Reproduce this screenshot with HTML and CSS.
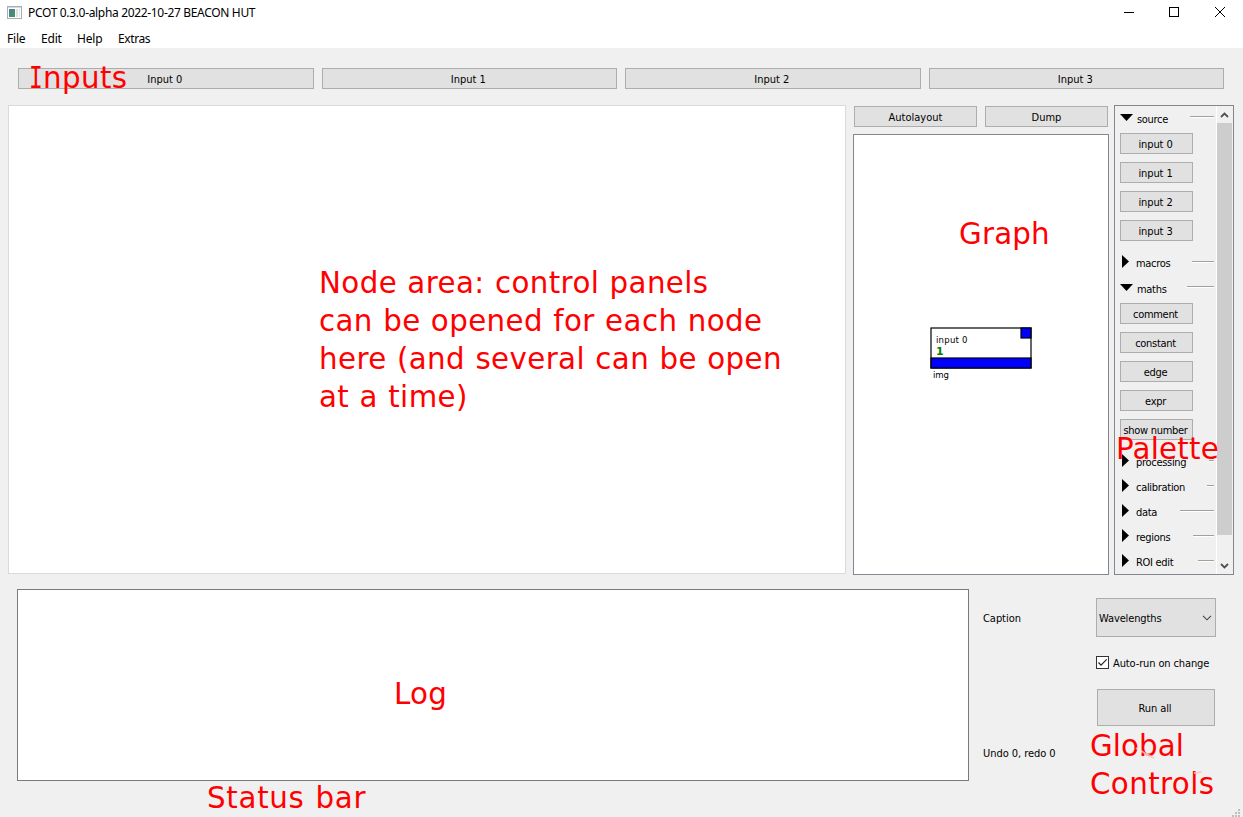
FILE: index.html
```html
<!DOCTYPE html>
<html lang="en">
<head>
<meta charset="utf-8">
<title>PCOT</title>
<link rel="stylesheet" href="styles.css">
</head>
<body>
<div class="window">
  <header class="titlebar">
    <svg class="app-icon" width="15" height="13" viewBox="0 0 15 13"><defs><linearGradient id="g" x1="0" y1="0" x2="0.6" y2="1"><stop offset="0" stop-color="#4a7a9c"/><stop offset="1" stop-color="#46936a"/></linearGradient></defs><rect x=".5" y=".5" width="14" height="12" fill="#fff" stroke="#a9adb1"/><rect x="1" y="1" width="13" height="1" fill="#d5d8da"/><rect x="2" y="3" width="6" height="8" fill="url(#g)"/><rect x="9" y="3" width="2" height="8" fill="#dde0e2"/><rect x="12" y="3" width="1" height="8" fill="#e3e5e7"/></svg>
    <span class="title">PCOT 0.3.0-alpha 2022-10-27 BEACON HUT</span>
    <svg class="controls" width="100" height="12" viewBox="0 0 100 12" fill="none" stroke="#000"><path d="M0 6.5H10"/><rect x="45.500" y="1.500" width="9" height="9"/><path d="M91 1L101 11M101 1L91 11" /></svg>
  </header>
  <nav class="menubar"><span class="m-file">File</span><span class="m-edit">Edit</span><span class="m-help">Help</span><span class="m-extras">Extras</span></nav>

  <section class="inputs">
    <button class="btn">Input 0</button><button class="btn">Input 1</button><button class="btn">Input 2</button><button class="btn">Input 3</button>
  </section>

  <main class="work">
    <section class="node-area"></section>
    <section class="graph-col">
      <div class="graph-tools"><button class="btn">Autolayout</button><button class="btn">Dump</button></div>
      <div class="graph">
        <svg class="node" width="104" height="56" viewBox="0 0 104 56">
          <g stroke="#000" stroke-width="1.200"><rect x="1" y="1" width="100" height="40" fill="#fff"/><rect x="91" y="1" width="10" height="10" fill="#00f"/><rect x="1" y="31" width="100" height="10" fill="#00f"/></g>
          <text class="node-name" x="6" y="16" textLength="31.500">input 0</text>
          <text class="node-count" x="6" y="28">1</text>
          <text class="node-name" x="3" y="51" textLength="16">img</text>
        </svg>
      </div>
    </section>
    <aside class="palette">
      <div class="palette-list">
        <div class="group open l24"><i class="down"></i><span>source</span><hr></div>
        <div class="items sources"><button class="btn">input 0</button><button class="btn">input 1</button><button class="btn">input 2</button><button class="btn">input 3</button></div>
        <div class="group l22"><i class="right"></i><span>macros</span><hr></div>
        <div class="group open l27"><i class="down"></i><span>maths</span><hr></div>
        <div class="items"><button class="btn">comment</button><button class="btn">constant</button><button class="btn">edge</button><button class="btn">expr</button><button class="btn">show number</button></div>
        <div class="group l5"><i class="right"></i><span>processing</span><hr></div>
        <div class="group l7"><i class="right"></i><span>calibration</span><hr></div>
        <div class="group l34"><i class="right"></i><span>data</span><hr></div>
        <div class="group l21"><i class="right"></i><span>regions</span><hr></div>
        <div class="group l16"><i class="right"></i><span>ROI edit</span><hr></div>
      </div>
      <div class="scrollbar">
        <svg width="15" height="17" viewBox="0 0 15 17" fill="none" stroke="#505050" stroke-width="1.800"><path d="M4 11L7.500 7.500L11 11"/></svg>
        <div class="thumb"></div>
        <svg width="15" height="17" viewBox="0 0 15 17" fill="none" stroke="#505050" stroke-width="1.800"><path d="M4 7L7.500 10.500L11 7"/></svg>
      </div>
    </aside>
  </main>

  <section class="bottom">
    <div class="log"></div>
    <div class="status"><span>Caption</span><span>Undo 0, redo 0</span></div>
    <div class="global">
      <div class="select"><span>Wavelengths</span><svg width="10" height="6" viewBox="0 0 10 6" fill="none" stroke="#444" stroke-width="1.100"><path d="M1 .8L5 4.800L9 .8"/></svg></div>
      <label class="check"><svg width="13" height="13" viewBox="0 0 13 13" fill="none"><rect x=".5" y=".5" width="12" height="12" fill="#fff" stroke="#333"/><path d="M2.500 6.500L5 9.200L10.700 3.300" stroke="#222" stroke-width="1.200"/></svg><span>Auto-run on change</span></label>
      <button class="btn run">Run all</button>
    </div>
  </section>

  <svg class="grip" width="8" height="8" viewBox="0 0 8 8" fill="#bfbfbf"><path d="M6 0h2v2h-2zM3 3h2v2h-2zM6 3h2v2h-2zM0 6h2v2h-2zM3 6h2v2h-2zM6 6h2v2h-2z"/></svg>

  <div class="note n-inputs"><span class="slab">I</span>nputs</div>
  <div class="note n-node">Node area: control panels<br>can be opened for each node<br>here (and several can be open<br>at a time)</div>
  <div class="note n-graph">Graph</div>
  <div class="note n-palette">Palette</div>
  <div class="note n-log">Log</div>
  <div class="note n-status">Status bar</div>
  <div class="note n-global">Global<br><span class="wide">Controls</span></div>
  <svg class="scuffs" width="70" height="32" viewBox="0 0 70 32" fill="none" stroke-width="2"><path d="M2 2L14 9" stroke="#f0f0f0" stroke-opacity=".7"/><path d="M12 8L20 12M60 27l8 -1" stroke="#ffc4c4" stroke-opacity=".8"/></svg>
</div>
</body>
</html>
```
FILE: styles.css
```css
* { box-sizing: border-box; }
body { margin: 0; background: #f0f0f0; color: #000; font: 11px/13px "DejaVu Sans Condensed", "DejaVu Sans", sans-serif; font-stretch: condensed; letter-spacing: -0.3px; }
.window { position: relative; width: 1243px; height: 817px; overflow: hidden; display: flex; flex-direction: column; }
.titlebar, .menubar { background: #fff; font-family: "Noto Sans", sans-serif; font-size: 12px; font-stretch: normal; display: flex; }
.titlebar { height: 26px; align-items: center; padding: 0 17px 2px 7px; }
.title { margin-left: 6px; letter-spacing: -0.33px; }
.controls { margin-left: auto; margin-right: 2px; overflow: visible; }
.menubar { height: 22px; padding: 6px 0 0 7px; letter-spacing: -0.2px; }
.m-file { width: 34px; }
.m-edit { width: 36px; }
.m-help { width: 41px; }
.m-extras { letter-spacing: -0.4px; }
.btn { display: block; height: 21px; margin: 0; padding: 2px 2px 0 0; border: 1px solid #adadad; background: #e1e1e1; color: #000; font: inherit; font-stretch: condensed; letter-spacing: inherit; text-align: center; white-space: nowrap; }
.inputs { display: grid; grid-template-columns: repeat(4, 1fr); gap: 8px; padding: 20px 19px 0 18px; height: 57px; letter-spacing: 0; }
.work { display: flex; height: 470px; padding: 0 9px 0 8px; }
.node-area { width: 838px; height: 469px; background: #fff; border: 1px solid #dadada; }
.graph-col { width: 256px; margin-left: 7px; display: flex; flex-direction: column; }
.graph-tools { display: grid; grid-template-columns: 1fr 1fr; gap: 8px; padding: 1px 1px 7px; letter-spacing: 0; }
.graph-tools .btn { padding-right: 0; }
.graph { position: relative; flex: 1; background: #fff; border: 1px solid #828790; }
.node { position: absolute; left: 76px; top: 192px; }
.node-name { font-size: 9.5px; letter-spacing: 0; }
.node-count { font: bold 11px "DejaVu Sans", sans-serif; fill: #008000; }
.palette { width: 120px; margin-left: 5px; border: 1px solid #828790; display: flex; overflow: hidden; }
.palette-list { width: 101px; padding-left: 5px; }
.group { height: 25px; display: flex; align-items: flex-start; padding: 5px 2px 0 0; }
.group span { margin-top: 2px; white-space: nowrap; }
.group hr { margin: 6px 0 0 auto; border: 0; height: 2px; background: #a0a0a0; border-bottom: 1px solid #fff; }
.open { height: 27px; }
.open hr { margin-top: 5px; }
.items + .group { margin-top: 9px; }
.group:not(.open) + .open { height: 28px; padding-top: 6px; }
.group .down { width: 17px; height: 7px; margin-top: 3px; background: #000; clip-path: polygon(0 0, 13px 0, 6.5px 7px); }
.group .right { width: 16px; height: 13px; background: #000; clip-path: polygon(2px 0, 9px 6.5px, 2px 13px); }
.l24 hr { width: 24px; }
.l22 hr { width: 22px; }
.l27 hr { width: 27px; }
.l5 hr { width: 5px; }
.l7 hr { width: 7px; }
.l34 hr { width: 34px; }
.l21 hr { width: 21px; }
.l16 hr { width: 16px; }
.items { display: grid; gap: 8px; width: 73px; }
.sources { letter-spacing: -0.1px; }
.scrollbar { width: 17px; border-left: 1px solid #fff; padding-right: 1px; display: flex; flex-direction: column; }
.scrollbar svg { display: block; flex: none; }
.thumb { height: 412px; flex: none; background: #cdcdcd; }
.scrollbar svg:last-child { margin-top: 22px; }
.bottom { display: flex; padding: 14px 0 0 17px; letter-spacing: -0.12px; }
.log { width: 952px; height: 192px; background: #fff; border: 1px solid #7a7a7a; }
.status { width: 127px; padding: 23px 0 0 14px; display: flex; flex-direction: column; gap: 122px; letter-spacing: -0.05px; }
.global { width: 120px; padding-top: 9px; }
.select { height: 39px; background: #e1e1e1; border: 1px solid #adadad; display: flex; align-items: center; justify-content: space-between; padding: 1px 3px 0 2px; }
.check { display: flex; gap: 4px; margin-top: 19px; white-space: nowrap; }
.check span { padding-top: 1px; }
.run { width: 118px; height: 37px; margin: 19px 0 0 1px; }
.grip { position: absolute; left: 1232px; top: 809px; }
.note { position: absolute; color: #f00; font: 29.3px/38px "DejaVu Sans", sans-serif; font-stretch: normal; white-space: nowrap; }
.slab { display: inline-block; width: 14px; font-family: "DejaVu Sans Mono", monospace; transform: scaleX(.78); transform-origin: 0 0; }
.n-inputs { left: 29px; top: 59px; letter-spacing: 0.4px; }
.n-node { left: 319px; top: 264px; letter-spacing: 0.4px; word-spacing: 0.6px; }
.n-graph { left: 959px; top: 215px; letter-spacing: 0.2px; }
.n-palette { left: 1116px; top: 430px; letter-spacing: 0.2px; }
.n-log { left: 394px; top: 675px; letter-spacing: 0.3px; }
.n-status { left: 207px; top: 779px; letter-spacing: 0.7px; word-spacing: 1px; }
.n-global { left: 1090px; top: 727px; letter-spacing: 0.1px; }
.wide { letter-spacing: 0.4px; }
.scuffs { position: absolute; left: 1134px; top: 746px; }
```
